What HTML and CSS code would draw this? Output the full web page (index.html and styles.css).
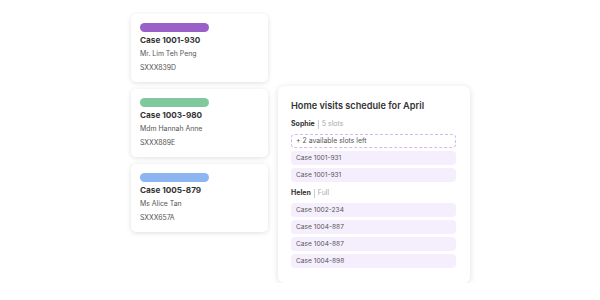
FILE: index.html
```html
<!DOCTYPE html>
<html lang="en">
<head>
    <meta charset="UTF-8">
    <title>Case board</title>
    <link rel="stylesheet" href="styles.css">
</head>
<body>
    <div class="board">
        <div class="cases">
            <div class="case-card">
                <div class="tag tag-purple"></div>
                <div class="case-title">Case 1001-930</div>
                <div class="case-line">Mr. Lim Teh Peng</div>
                <div class="case-line">SXXX839D</div>
            </div>
            <div class="case-card">
                <div class="tag tag-green"></div>
                <div class="case-title">Case 1003-980</div>
                <div class="case-line">Mdm Hannah Anne</div>
                <div class="case-line">SXXX889E</div>
            </div>
            <div class="case-card">
                <div class="tag tag-blue"></div>
                <div class="case-title">Case 1005-879</div>
                <div class="case-line">Ms Alice Tan</div>
                <div class="case-line">SXXX657A</div>
            </div>
        </div>

        <div class="schedule">
            <h2>Home visits schedule for April</h2>
            <div class="person"><b>Sophie</b><span class="sep"></span><span class="meta">5 slots</span></div>
            <div class="slot slot-free">+ 2 available slots left</div>
            <div class="slot">Case 1001-931</div>
            <div class="slot">Case 1001-931</div>
            <div class="person"><b>Helen</b><span class="sep"></span><span class="meta">Full</span></div>
            <div class="slot">Case 1002-234</div>
            <div class="slot">Case 1004-887</div>
            <div class="slot">Case 1004-887</div>
            <div class="slot">Case 1004-898</div>
        </div>
    </div>
</body>
</html>
```

FILE: styles.css
```css
body {
    margin: 0;
    background: #fff;
    font-family: Inter, "Liberation Sans", sans-serif;
    color: #333;
}
.board {
    display: flex;
    align-items: flex-start;
    gap: 10px;
    padding: 14px 0 0 131px;
}
.cases {
    display: flex;
    flex-direction: column;
    gap: 7px;
    width: 137px;
}
.case-card {
    background: #fff;
    border-radius: 5px;
    box-shadow: 0 1px 5px rgba(0, 0, 0, 0.13);
    padding: 9px 9px 7px;
    height: 68px;
    box-sizing: border-box;
}
.tag {
    width: 69px;
    height: 9px;
    border-radius: 5px;
}
.tag-purple { background: #9a60c7; }
.tag-green { background: #80c99c; }
.tag-blue { background: #8cb5f2; }
.case-title {
    font-size: 8.2px;
    font-weight: 700;
    line-height: 13px;
    margin-top: 2px;
    color: #333;
}
.case-line {
    font-size: 6.9px;
    line-height: 14px;
    color: #555;
}
.schedule {
    width: 192px;
    box-sizing: border-box;
    margin-top: 72px;
    padding: 13px 14px 15px 13px;
    background: #fff;
    border-radius: 6px;
    box-shadow: 0 1px 6px rgba(0, 0, 0, 0.13);
    display: flex;
    flex-direction: column;
    gap: 3px;
}
.schedule h2 {
    margin: 0 0 1px;
    font-size: 9.2px;
    font-weight: 600;
    line-height: 14px;
    color: #333;
}
.person {
    display: flex;
    align-items: center;
    font-size: 7px;
    line-height: 14px;
    color: #333;
}
.person b {
    font-weight: 700;
}
.person .sep {
    width: 1px;
    height: 9px;
    background: #ccc;
    margin: 0 3px;
}
.person .meta {
    color: #aaa;
}
.schedule .slot + .person {
    margin-top: 1px;
}
.slot {
    height: 14px;
    line-height: 14px;
    border-radius: 4px;
    background: #f5effd;
    padding-left: 5px;
    font-size: 6.6px;
    color: #555;
}
.slot-free {
    background: #fff;
    border: 1px dashed #d5b8ef;
    padding-left: 4px;
    line-height: 12px;
    box-sizing: border-box;
    font-size: 6.9px;
}
```
